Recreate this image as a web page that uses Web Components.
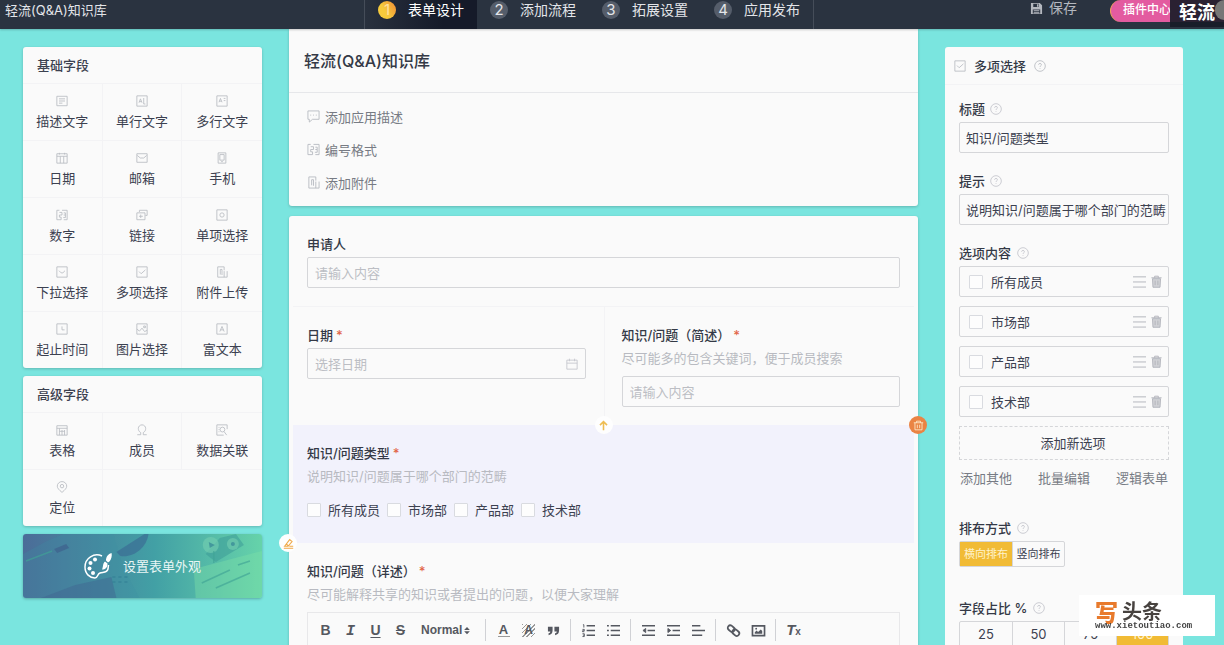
<!DOCTYPE html>
<html lang="zh-CN">
<head>
<meta charset="utf-8">
<meta name="viewport" content="width=device-width, initial-scale=1">
<title>轻流(Q&amp;A)知识库</title>
<style>
  html, body { margin: 0; height: 100%; }
  body {
    --ink: #3c4150; --muted: #777b84; --faint: #bcbec4; --line: #d5d6d9; --hair: #f3f3f5;
    --paper: #fafafa; --amber: #f1bb35; --teal: #7ae5df; --dark: #2a3340;
    font: 13px/20px Inter, "Noto Sans CJK SC", sans-serif;
    color: var(--ink); background: var(--teal);
  }
</style>
</head>
<body>
<form-builder></form-builder>

<script>
const define = (tag, render) => customElements.define(tag, class extends HTMLElement {
  constructor() { super(); this.attachShadow({ mode: 'open' }); }
  connectedCallback() {
    const t = document.createElement('template');
    t.innerHTML = render(this);
    this.shadowRoot.replaceChildren(t.content.cloneNode(true));
  }
});
const RESET = `*, *::before { box-sizing: border-box; } [hidden] { display: none; }
  button, input, select { font: inherit; color: inherit; margin: 0; }
  button { border: 0; background: none; padding: 0; cursor: pointer; }
  input[type=checkbox] { appearance: none; width: 14px; height: 14px; flex: none; border: 1px solid #d9dbe0; border-radius: 1px; background: #fdfdfd; }`;

/* ---------- icons, drawn on a 14 x 14 grid ---------- */
const ICONS = {
  text: '<path d="M1 1.5h12v11H1zM3.5 4.5h7M3.5 7h7M3.5 9.5h4"/>',
  single: '<path d="M1 1h12v12H1zM3.5 9l1.7-4.5L7 9M4 7.7h2.3M9 3.5v7M9 10.5h2"/>',
  multi: '<path d="M1 1h12v12H1zM3.5 8.500l1.700-4.500L7 8.500M4 7.200h2.300M9 4h2M9 6.500h2"/>',
  date: '<path d="M1 2h12v11H1zM1 5h12M5 5v8M9 5v8M4 1v2M10 1v2"/>',
  mail: '<path d="M1 2h12v10H1zM1.500 4L5 7h4l3.500-3"/>',
  phone: '<path d="M2.500 1h9v12h-9zM4.500 3h5v6.500h-5zM6 11.200h2"/>',
  number: '<path d="M4 1.500H1v11h5V9.500H4V7h3V4H4M7 1.500h6v11H9M9 4.500h2v2.500H9M11 7v3H8.500"/>',
  link: '<path d="M4 3.500V1.500h9v6h-2M1 4.500h9.500v8H1zM3.500 8.500h4.500M5.500 6.500v4"/>',
  radio: '<path d="M1 1h12v12H1z"/><circle cx="7" cy="7" r="2.500"/>',
  select: '<path d="M1 1h12v12H1zM3.500 5.500L6 8h2l2.500-2.500"/>',
  check: '<path d="M1 1h12v12H1zM3.500 6.500L6 9l5-4.500"/>',
  attach: '<path d="M9.500 5V1H2v12h11V6M5 10V4h2v6.500M9.500 6v7"/>',
  clock: '<path d="M1 1h12v12H1zM7 4v4h3"/>',
  picture: '<path d="M1 1h12v12H1zM1 7l3 2.500L7 6l3 4 3-1.500M9 3.500h2v2H9z"/>',
  rich: '<path d="M1 1h12v12H1zM4.500 10L7 4l2.500 6M5.300 8h3.400"/>',
  table: '<path d="M1 2h12v11H1zM1 5h12M4 5v8M7 7v6M10 7v6M4 8.500h6"/>',
  member: '<path d="M1.500 12.500h4V10C3.500 9 2.700 7 2.700 5.300 2.700 3 4.500 1 7 1s4.300 2 4.300 4.300C11.300 7 10.500 9 8.500 10v2.500h4"/>',
  relate: '<path d="M13 6V1H1v12h8"/><circle cx="7.500" cy="6.500" r="2.800"/><path d="M9.500 9l3 4M3 4h1M3 6.500h1M3 9h1"/>',
  pin: '<path d="M7 13.300C3.500 10.300 1.500 8.400 1.500 6a5.500 5.300 0 0 1 11 0c0 2.400-2 4.300-5.500 7.300z"/><circle cx="7" cy="6" r="2"/>',
  comment: '<path d="M1 1h12v9H6l-3.500 3v-3H1zM3.500 5.500h1M6.500 5.500h1M9.500 5.500h1"/>',
  help: '<circle cx="7" cy="7" r="6.200"/><path d="M5.300 5.500c0-2 3.400-2 3.400 0C8.700 6.800 7 6.700 7 8.200M7 9.600v.8"/>',
  calendar: '<path d="M1 2.500h12v10.500H1zM1 6h12M4 .8v3M10 .8v3"/>',
  lines: '<path d="M0 2h14M0 7.500h14M0 13h14"/>',
  bin: '<path d="M1.500 3h11M5 3V1.300h4V3"/><path d="M2.700 4h8.600l-.5 9.200H3.200z" fill="currentColor" fill-opacity=".55"/><path d="M5.500 6v5M8.500 6v5"/>',
  trash: '<path d="M1 3.500h12M4.500 3.500v-2h5v2M2.500 3.500v9h9v-9M5.500 6v4.500M8.500 6v4.500"/>',
  up: '<path stroke-width="2" d="M7 13V2M2.500 6.500L7 2l4.500 4.500"/>',
  edit: '<path stroke-width="1.400" d="M1 13h12M2 10.500L8.500 2l3 2.500-5 6zM8 10.500h5M4.500 8l2.500 2"/>',
  save: '<path fill="currentColor" stroke="none" fill-rule="evenodd" d="M1 1h9.500L13 3.500V13H1zM3.500 2v3.500h6V2zM3 8v4.500h8V8zM7.500 2.500H9V5H7.500zM4 9h6v1H4zM4 11h6v1H4z"/>',
  quote: '<path fill="currentColor" stroke="none" d="M1 3h5v4c0 3-1.500 4.500-4.300 5V10C3 9.700 3.500 9 3.500 8H1zM8 3h5v4c0 3-1.500 4.500-4.300 5V10c1.300-.3 1.800-1 1.800-2H8z"/>',
  ol: '<path stroke-width="1.600" d="M5 2h9M5 7h9M5 12h9"/><path d="M1 .8h1v3M.5 5.800h2v1.500h-2v1h2M.5 10.500h2v3h-2M1 12h1.500"/>',
  ul: '<path stroke-width="1.600" d="M4 2h10M4 7h10M4 12h10M0 2h2M0 7h2M0 12h2"/>',
  outdent: '<path stroke-width="1.600" d="M0 2h14M6 7h8M0 12h14"/><path fill="currentColor" d="M4 4.800v4.400L1 7z"/>',
  indent: '<path stroke-width="1.600" d="M0 2h14M6 7h8M0 12h14"/><path fill="currentColor" d="M1 4.800v4.400L4 7z"/>',
  align: '<path stroke-width="1.600" d="M0 2h9M0 7h14M0 12h11"/>',
  chain: '<g stroke-width="1.900"><rect x="0.500" y="2.300" width="8" height="5.400" rx="2.700" transform="rotate(40 4.500 5)"/><rect x="5.500" y="6.600" width="8" height="5.400" rx="2.700" transform="rotate(40 9.500 9.300)"/></g>',
  image: '<path stroke-width="1.800" d="M.5 2h13v10.500H.5z"/><path fill="currentColor" stroke="none" d="M3 10.500V9l2-2 1.500 1.500L9.500 6 11 7.500v3z"/><circle cx="4.500" cy="5" r="1" fill="currentColor" stroke="none"/>',
  sort: '<path fill="currentColor" stroke="none" d="M2 6l5-5 5 5zM2 8.500l5 5 5-5z"/>',
};
define('fb-icon', el => `<style>:host { display: inline-block; width: 12px; height: 12px; flex: none; } svg { display: block; width: 100%; height: 100%; overflow: visible; }</style>
  <svg viewBox="0 0 14 14" fill="none" stroke="currentColor" aria-hidden="true">${ICONS[el.getAttribute('name')]}</svg>`);

/* ---------- top bar ---------- */
define('top-bar', () => `<style>${RESET}
  :host { display: flex; background: var(--dark); color: #e3e5e9; height: 29px; flex: none; position: relative; z-index: 2; box-shadow: 0 1px 2px #0003; }
  h1 { flex: 1; margin: 0; padding-left: 5px; font: inherit; }
  nav { display: flex; border: solid #454d59; border-width: 0 1px; font-size: 14px; }
  nav a { display: flex; gap: 12px; padding: 0 13px 10px 13px; align-items: center; color: inherit; text-decoration: none; }
  nav a[aria-current] { background: linear-gradient(90deg, #29313e, #151a29 70%); color: #fff; }
  i { width: 18px; height: 18px; border-radius: 50%; background: #555d6a; font: 15px/18px Inter, sans-serif; text-align: center; }
  [aria-current] i { background: linear-gradient(60deg, #f6ca3c 40%, #f08a35); color: #ffe3a0; }
  .tools { width: 410px; display: flex; justify-content: flex-end; overflow: hidden; }
  .save { display: flex; gap: 6px; align-items: center; height: 16px; color: #b4b8bf; font-size: 14px; margin-right: 33px; }
  .save fb-icon { width: 13px; height: 13px; }
  .plug { width: 114px; height: 22px; border-radius: 11px 0 0 11px; background: #e35ba0; color: #fff; text-align: left; padding: 0 0 2px 12px; font-size: 12px; font-weight: 500; border-left: 1px solid #f0a45d; }
  .brand { position: absolute; right: 0; top: 0; width: 54px; height: 27px; padding-left: 9px; background: #171b27e8; color: #fff; font: 700 18px/22px "Noto Sans CJK SC", sans-serif; white-space: nowrap; }
  .brand::after { content: ""; position: absolute; right: 0; top: 0; width: 9px; height: 20px; border-radius: 10px 0 0 10px; background: #777; }
  </style>
  <h1>轻流(Q&amp;A)知识库</h1>
  <nav><a href="#design" aria-current="step"><i>1</i>表单设计</a><a href="#flow"><i>2</i>添加流程</a><a href="#extend"><i>3</i>拓展设置</a><a href="#publish"><i>4</i>应用发布</a></nav>
  <div class="tools"><button class="save"><fb-icon name="save"></fb-icon>保存</button><button class="plug">插件中心</button></div>
  <div class="brand">轻流</div>`);

/* ---------- left palette ---------- */
define('field-palette', el => `<style>${RESET}
  :host { display: block; background: var(--paper); border-radius: 3px; box-shadow: 0 1px 3px #0003; overflow: hidden; }
  h2 { margin: 0; height: 36px; line-height: 36px; padding-left: 14px; font-size: 13px; font-weight: 500; }
  div { display: grid; grid-template-columns: repeat(3, 1fr); }
  button { height: 57px; display: flex; flex-direction: column; align-items: center; gap: 4px; padding-top: 11px; border-top: 1px solid var(--hair); border-right: 1px solid var(--hair); }
  button:nth-child(3n) { border-right: 0; }
  div::after { content: ""; grid-column: 2 / -1; border-top: 1px solid var(--hair); }
  div.full::after { display: none; }
  fb-icon { color: #b9bcc2; }</style>
  <h2>${el.getAttribute('heading')}</h2>
  <div class="${el.hasAttribute('full') ? 'full' : ''}">${el.getAttribute('fields').split(' ').map(f => { const [n, t] = f.split(':'); return `<button><fb-icon name="${n}"></fb-icon>${t}</button>`; }).join('')}</div>`);

define('theme-button', () => `<style>${RESET}
  :host { display: block; }
  button { position: relative; display: flex; align-items: center; justify-content: center; gap: 11px; width: 100%; height: 64px; border-radius: 3px; overflow: hidden; color: #e8f6f5; background: linear-gradient(90deg, #4b6c98, #42a0a5 55%, #66d3aa); box-shadow: 0 1px 3px #0004; }
  .art { position: absolute; inset: 0; width: 100%; height: 100%; }
  .palette { position: relative; width: 28px; height: 26px; } span { position: relative; }</style>
  <button>
    <svg class="art" viewBox="0 0 238 64" preserveAspectRatio="none" aria-hidden="true">
      <path d="M0 20L22 8 40 0h50l10 34 16 30H0z" fill="#3c8fa5" opacity=".25"/>
      <path d="M18 64l34-13 36-8 5 21z" fill="#406391" opacity=".45"/>
      <path d="M93 18l28-18h4c-2 14-15 24-28 22z" fill="#3b6a94" opacity=".65"/>
      <path d="M31 15l12-5 3 4-12 5z" fill="#3d5c8b" opacity=".6"/>
      <path d="M170 35l68-18v47h-66z" fill="#7de0a8" opacity=".4"/>
      <path d="M196 4l16-4 8 11-28 17-10-8z" fill="#3a9795" opacity=".5"/>
      <g fill="#72cdb1" opacity=".65"><circle cx="187" cy="11" r="8"/><circle cx="209" cy="10" r="6"/></g>
      <path d="M185 8l6 3-5 3z" fill="#43989c"/><circle cx="209" cy="10" r="2" fill="#43989c"/>
      <path d="M190 17v12M178 49l28-13M192 54l34-15M214 31l12-4M3 27l26-10" stroke="#40a496" stroke-width="1.500" opacity=".65"/>
      <path d="M89 43h18M89 48h18" stroke="#317f95" stroke-width="2" stroke-dasharray="3 3" opacity=".5"/>
    </svg>
    <svg class="palette" viewBox="0 0 28 26" fill="none" stroke="#fff" stroke-width="1.500" aria-hidden="true">
      <path d="M18 3C10-.5 1 5 1 14c0 7 5 11 10 11 3 0 2-4 5-5 3-1 7 0 8-4l.5-4"/>
      <g fill="#fff" stroke="none"><circle cx="11" cy="6.500" r="2"/><circle cx="6.500" cy="10" r="2"/><circle cx="5.500" cy="15.500" r="2"/><circle cx="9" cy="20" r="2"/><path d="M27.500 0c1 4-1 8-3.500 9.500l-2-2C22 4 24 1 27.500 0zM21 8.500l2.500 2c0 4-2 6-5.500 6 1.500-3 .5-6 3-8z"/></g>
    </svg>
    <span>设置表单外观</span>
  </button>`);

/* ---------- form canvas ---------- */
const FIELD = `${RESET}
  :host { display: block; min-width: 0; }
  .label { display: block; font-weight: 500; color: #343946; }
  .req { color: #e2674a; margin-left: 3px; }
  .hint { margin: 3px 0 0; color: #b8bac1; }`;
const heading = el => `${el.getAttribute('label')}${el.hasAttribute('required') ? '<span class="req">*</span>' : ''}`;
const hint = el => el.hasAttribute('hint') ? `<p class="hint">${el.getAttribute('hint')}</p>` : '';

define('text-field', el => `<style>${FIELD}
  .box { display: flex; align-items: center; height: 31px; margin-top: ${el.hasAttribute('hint') ? 8 : 3}px; padding-right: 7px; border: 1px solid var(--line); border-radius: 2px; }
  input { flex: 1; min-width: 0; border: 0; outline: 0; padding: 0 0 0 7px; background: none; height: 100%; }
  :host([value]) input { padding-left: 6px; } :host([value]) .box { padding-right: 1px; }
  ::placeholder { color: var(--faint); opacity: 1; }
  .head { display: flex; align-items: center; gap: 5px; } fb-icon { color: #c3c5cb; }</style>
  <div class="head"><label class="label" for="f">${heading(el)}</label>${el.hasAttribute('help') ? '<fb-icon name="help"></fb-icon>' : ''}</div>${hint(el)}
  <div class="box"><input id="f" type="text" placeholder="${el.getAttribute('placeholder') || ''}" value="${el.getAttribute('value') || ''}">${el.hasAttribute('icon') ? `<fb-icon name="${el.getAttribute('icon')}"></fb-icon>` : ''}</div>`);

define('choice-field', el => `<style>${FIELD}
  .choices { display: flex; flex-wrap: wrap; gap: 7px; margin-top: 14px; }
  .choices label { display: flex; align-items: center; gap: 7px; }</style>
  <div role="group" aria-labelledby="l"><span class="label" id="l">${heading(el)}</span>${hint(el)}
  <div class="choices">${el.getAttribute('options').split(' ').map(o => `<label><input type="checkbox">${o}</label>`).join('')}</div></div>`);

define('rich-field', el => {
  const b = (names) => names.split(' ').map(n => `<button aria-label="${n}"><fb-icon name="${n}"></fb-icon></button>`).join('');
  return `<style>${FIELD}
  .bar { display: flex; align-items: center; margin-top: 8px; height: 36px; padding-left: 5px; border: 1px solid #e8e8ea; color: #555860; }
  .bar fb-icon { width: 13px; height: 13px; }
  .body { height: 90px; border: 1px solid #e8e8ea; border-top: 0; }
  button { width: 25px; height: 22px; font: 700 14px/20px "Liberation Sans", sans-serif; display: grid; place-items: center; flex: none; }
  hr { width: 1px; height: 22px; margin: 0 5px 0 4px; border: 0; background: #d0d1d5; flex: none; }
  .it { font: italic 700 15px/22px "Liberation Mono", monospace; padding-top: 2px; }
  .un { text-decoration: underline; text-underline-offset: 2px; } .st { text-decoration: line-through; }
  .fg span { line-height: 12px; font-size: 13px; border-bottom: 1px solid #999; width: 12px; }
  .bg span { line-height: 13px; width: 13px; font-size: 12px; background: repeating-linear-gradient(135deg, #999 0 1px, transparent 1px 3px); }
  .cl { font: italic 700 15px/18px "Liberation Sans", sans-serif; } .cl b { font: 700 10px/10px "Liberation Sans", sans-serif; }
  .size { position: relative; display: flex; align-items: center; width: 68px; flex: none; }
  select { appearance: none; border: 0; background: none; padding: 0 0 0 8px; width: 100%; height: 22px; font: 700 12px/20px "Liberation Sans", sans-serif; color: inherit; }
  .size fb-icon { position: absolute; left: 50px; width: 8px; height: 11px; }</style>
  <span class="label">${heading(el)}</span>${hint(el)}
  <div class="bar" role="toolbar"><button>B</button><button class="it">I</button><button class="un">U</button><button class="st">S</button>
  <span class="size"><select aria-label="标题级别"><option>Normal</option></select><fb-icon name="sort"></fb-icon></span><hr>
  <button class="fg"><span>A</span></button><button class="bg"><span>A</span></button>${b('quote')}<hr>${b('ol ul')}<hr>${b('outdent indent align')}<hr>${b('chain image')}<hr><button class="cl"><span>T<b>x</b></span></button></div>
  <div class="body"></div>`;
});

define('form-canvas', () => `<style>${RESET}
  :host { display: flex; flex-direction: column; gap: 10px; min-width: 0; }
  section { background: var(--paper); box-shadow: 0 1px 3px #0003; border-radius: 3px; }
  .intro { border-radius: 0 0 3px 3px; padding-bottom: 7px; }
  h2 { margin: 0 0 7px; height: 64px; line-height: 64px; padding-left: 15px; font-size: 16px; font-weight: 500; border-bottom: 1px solid #e6e7ea; color: #343946; }
  .add { display: flex; align-items: center; gap: 5px; height: 33px; padding-left: 18px; color: var(--muted); }
  .add fb-icon { width: 13px; height: 13px; color: #b9bcc2; }
  .form { padding: 0 4px; }
  .row { padding: 18px 14px; border-bottom: 1px solid var(--hair); }
  .pair { display: flex; padding: 0 14px; border: 0; }
  .pair > * { flex: 1; padding: 18px 0; }
  .pair > :first-child { padding-right: 18px; border-right: 1px solid var(--hair); }
  .pair > :last-child { padding-left: 17px; }
  .picked { position: relative; background: #f2f2fc; padding-bottom: 23px; border: 0; }
  .dot { position: absolute; width: 18px; height: 18px; border-radius: 50%; display: grid; place-items: center; background: #fefefe; color: #eebd52; z-index: 1; }
  .dot fb-icon { width: 11px; height: 11px; }
  .move { top: -9px; left: calc(50% - 9px); } .del { top: -9px; right: -13px; background: #ea8444; color: #fff3d8; }
  .edit { bottom: -9px; left: -14px; color: #efa948; }</style>
  <section class="intro"><h2>轻流(Q&amp;A)知识库</h2>
    <button class="add"><fb-icon name="comment"></fb-icon>添加应用描述</button>
    <button class="add"><fb-icon name="number"></fb-icon>编号格式</button>
    <button class="add"><fb-icon name="attach"></fb-icon>添加附件</button></section>
  <section class="form">
    <text-field class="row" label="申请人" placeholder="请输入内容"></text-field>
    <div class="row pair"><text-field label="日期" required placeholder="选择日期" icon="calendar"></text-field>
      <text-field label="知识/问题（简述）" required hint="尽可能多的包含关键词，便于成员搜索" placeholder="请输入内容"></text-field></div>
    <div class="row picked">
      <choice-field label="知识/问题类型" required hint="说明知识/问题属于哪个部门的范畴" options="所有成员 市场部 产品部 技术部"></choice-field>
      <button class="dot move" aria-label="上移"><fb-icon name="up"></fb-icon></button>
      <button class="dot del" aria-label="删除"><fb-icon name="trash"></fb-icon></button>
      <button class="dot edit" aria-label="编辑"><fb-icon name="edit"></fb-icon></button>
    </div>
    <rich-field class="row" label="知识/问题（详述）" required hint="尽可能解释共享的知识或者提出的问题，以便大家理解"></rich-field>
  </section>`);

/* ---------- right settings ---------- */
define('option-row', el => `<style>${RESET}
  :host { display: flex; align-items: center; height: 31px; padding: 0 5px 0 9px; border: 1px solid var(--line); border-radius: 2px; }
  label { flex: 1; display: flex; align-items: center; gap: 8px; }
  button { display: grid; color: #b0b2ba; margin-left: 4px; } fb-icon { height: 13px; width: 13px; }</style>
  <label><input type="checkbox"><slot></slot></label>
  <button aria-label="排序"><fb-icon class="drag" name="lines"></fb-icon></button><button aria-label="删除"><fb-icon name="bin"></fb-icon></button>`);

define('segment-group', el => `<style>${RESET}
  :host { display: grid; grid-auto-flow: column; grid-auto-columns: 1fr; height: 26px; margin-top: 3px; border: 1px solid var(--line); border-radius: 2px; }
  :host([compact]) { width: 106px; font-size: 11px; }
  button + button { border-left: 1px solid var(--line); }
  button[aria-pressed=true] { background: var(--amber); color: #fff3cd; }</style>
  ${el.getAttribute('items').split(' ').map(i => `<button aria-pressed="${i === el.getAttribute('active')}">${i}</button>`).join('')}`);

define('settings-panel', () => `<style>${RESET}
  :host { display: block; background: var(--paper); border-radius: 3px 3px 0 0; min-height: 100%; }
  header { display: flex; align-items: center; gap: 8px; height: 38px; padding-left: 9px; border-bottom: 1px solid var(--hair); }
  header fb-icon { color: #b9bcc2; }
  h2, h3 { margin: 0; font-size: 13px; line-height: 20px; font-weight: 500; color: #343946; }
  .body { padding: 14px 14px 18px; display: grid; gap: 18px; }
  h3 { display: flex; align-items: center; gap: 6px; } h3 fb-icon { color: #c3c5cb; }
  .options { display: grid; gap: 9px; margin-top: 3px; }
  .new { height: 34px; border: 1px dashed #d5d6d9; padding-left: 18px; }
  .links { display: flex; justify-content: space-between; margin: 8px 0 12px; padding: 0 1px; }
  .links a { color: var(--muted); text-decoration: none; }
  .mode { margin-bottom: 13px; }</style>
  <header><fb-icon name="check"></fb-icon><h2>多项选择</h2><fb-icon name="help"></fb-icon></header>
  <div class="body">
    <text-field label="标题" value="知识/问题类型" help></text-field>
    <text-field label="提示" value="说明知识/问题属于哪个部门的范畴" help></text-field>
    <section><h3>选项内容<fb-icon name="help"></fb-icon></h3>
      <div class="options"><option-row>所有成员</option-row><option-row>市场部</option-row><option-row>产品部</option-row><option-row>技术部</option-row><button class="new">添加新选项</button></div>
      <div class="links"><a href="#other">添加其他</a><a href="#batch">批量编辑</a><a href="#logic">逻辑表单</a></div></section>
    <section class="mode"><h3>排布方式<fb-icon name="help"></fb-icon></h3><segment-group compact items="横向排布 竖向排布" active="横向排布"></segment-group></section>
    <section><h3>字段占比 %<fb-icon name="help"></fb-icon></h3><segment-group items="25 50 75 100" active="100"></segment-group></section>
  </div>`);

define('site-mark', () => `<style>
  :host { position: fixed; right: 9px; bottom: 9px; width: 136px; height: 41px; background: #fff; z-index: 3; box-sizing: border-box; padding: 5px 0 0 16px; }
  div { display: flex; align-items: center; gap: 4px; height: 22px; font: 700 20px/22px "Noto Sans CJK SC", sans-serif; color: #47423f; }
  b { font-size: 23px; color: #e87a2c; }
  small { display: block; font: 700 9px/9px "Liberation Mono", monospace; color: #444; }</style>
  <div><b>写</b>头条</div><small>www.xietoutiao.com</small>`);

define('form-builder', () => `<style>
  :host { display: flex; flex-direction: column; height: 100vh; overflow: hidden; }
  main { flex: 1; min-height: 0; display: grid; grid-template-columns: 239px minmax(0, 1fr) 238px; gap: 27px; padding: 0 41px 0 23px; }
  aside { padding-top: 18px; display: flex; flex-direction: column; gap: 8px; min-height: 0; }</style>
  <top-bar></top-bar>
  <main>
    <aside>
      <field-palette full heading="基础字段" fields="text:描述文字 single:单行文字 multi:多行文字 date:日期 mail:邮箱 phone:手机 number:数字 link:链接 radio:单项选择 select:下拉选择 check:多项选择 attach:附件上传 clock:起止时间 picture:图片选择 rich:富文本"></field-palette>
      <field-palette heading="高级字段" fields="table:表格 member:成员 relate:数据关联 pin:定位"></field-palette>
      <theme-button></theme-button>
    </aside>
    <form-canvas></form-canvas>
    <aside><settings-panel></settings-panel></aside>
  </main>
  <site-mark></site-mark>`);
</script>
</body>
</html>
